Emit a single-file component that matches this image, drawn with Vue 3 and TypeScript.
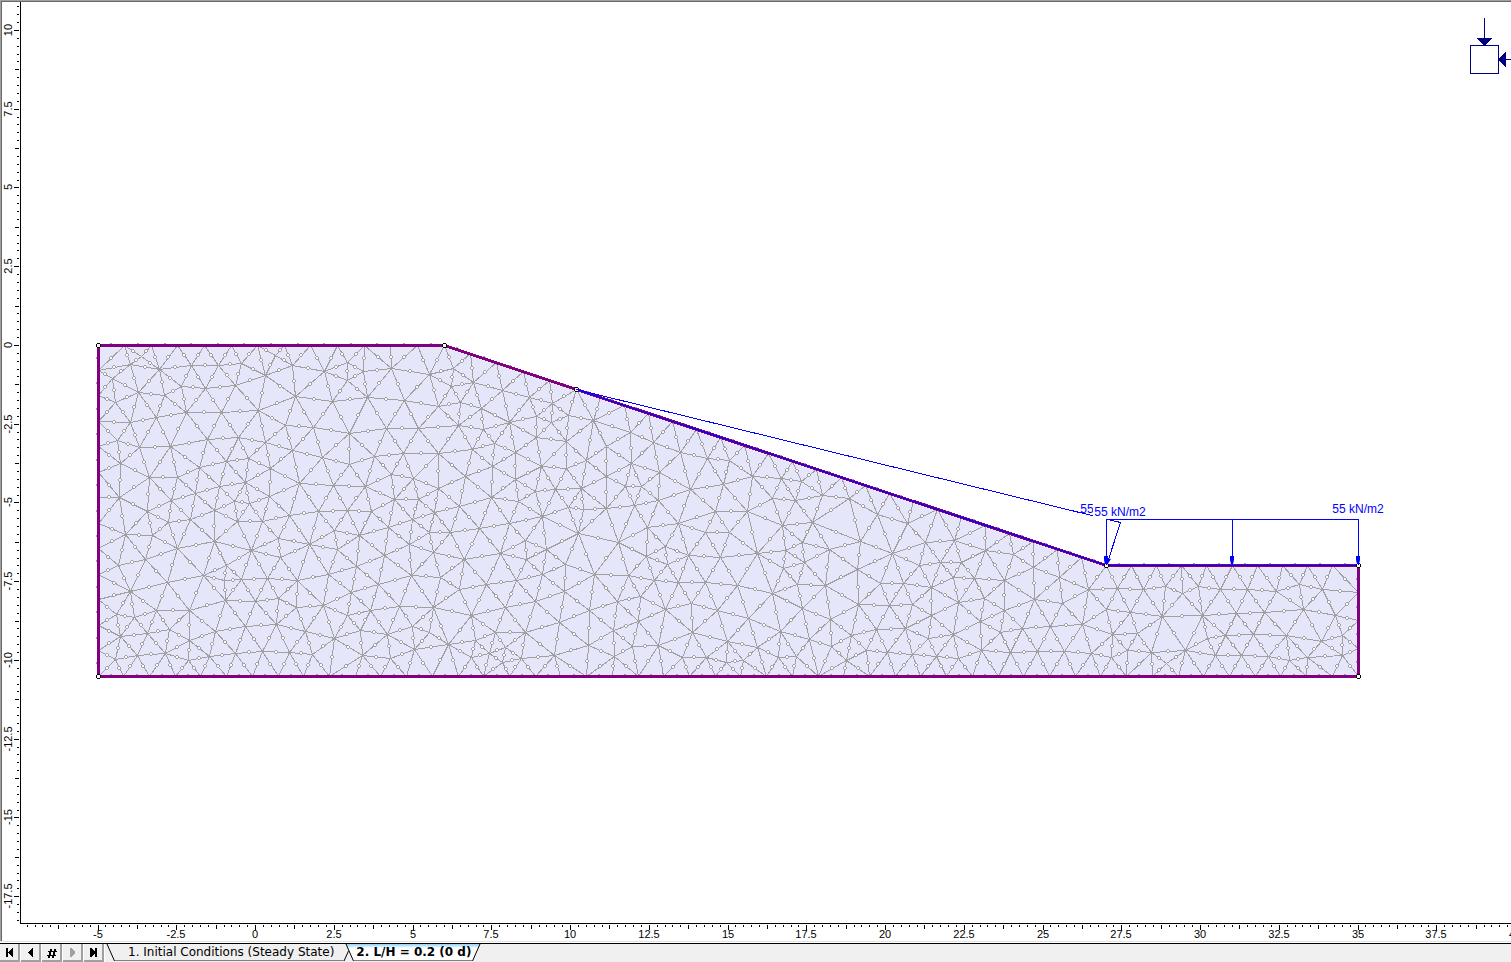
<script setup lang="ts">
import { computed, onBeforeUnmount, onMounted, ref } from 'vue'

type Point = [number, number]

interface Patch {
  x: number
  y: number
  nodes: string
}

interface Tick {
  at: number
  size: number
  label: string
}

/* World scale: pixels per metre and the position of the world origin. */
const SCALE = 31.5
const ORIGIN_X = 255.5
const ORIGIN_Y = 345.4

const width = ref(window.innerWidth)
const height = ref(window.innerHeight)

function measure() {
  width.value = window.innerWidth
  height.value = window.innerHeight
}

onMounted(() => window.addEventListener('resize', measure))
onBeforeUnmount(() => window.removeEventListener('resize', measure))

function makeTicks(from: number, to: number, toPixel: (v: number) => number): Tick[] {
  const ticks: Tick[] = []
  for (let q = from; q <= to; q++) {
    const value = q / 4
    const major = q % 10 === 0
    const size = major ? 5 : q % 5 === 0 ? 4 : 2
    ticks.push({ at: Math.floor(toPixel(value)), size, label: major ? String(value) : '' })
  }
  return ticks
}

const xTicks = computed(() =>
  makeTicks(-29, Math.ceil(((width.value - ORIGIN_X) / SCALE) * 4) + 1, (v) => ORIGIN_X + v * SCALE),
)
const yTicks = computed(() =>
  makeTicks(-Math.floor(((height.value - 41 - ORIGIN_Y) / SCALE) * 4), 43, (v) => ORIGIN_Y - v * SCALE),
)
const xLabels = computed(() => xTicks.value.filter((t) => t.label))
const yLabels = computed(() => yTicks.value.filter((t) => t.label))

/* Interior mesh nodes, in thirds of a pixel from each patch's corner. */
const patches: Patch[] = [
  {
    x: 80,
    y: 330,
    nodes: `185,80 587,76 151,102 97,146 239,118 334,107 416,105 485,99 636,105 556,136 802,98 732,124 802,151 851,124 933,115 1047,133
176,187 107,216 254,195 304,168 377,175 466,166 647,199 757,214 862,202 973,212 1075,229
152,276 229,262 320,246 425,247 535,241 615,287 701,292 808,310 920,296 1016,296
112,331 179,352 272,349 382,327 474,323 556,338 638,361 728,382 808,403 884,379 970,371 1076,370
122,399 208,442 293,443 359,412 439,394 505,385 571,415 659,460 761,466 857,469 934,433 1000,444 1076,474
119,502 203,544 274,511 347,490 417,468 496,458 463,514 509,521 568,499 404,540 331,569 264,577 473,574 548,574 628,556 716,543 802,542 874,544 943,507 1015,507 1064,546
137,612 218,615 292,655 403,633 514,662 595,626 602,683 687,643 764,602 773,657 837,616 926,592 998,568 1047,607 1110,607
116,705 196,687 263,757 371,736 440,707 434,750 484,748 562,745 652,751 745,732 830,708 913,677 989,642 1061,668 994,737
151,785 229,841 328,842 437,811 526,814 596,806 649,832 730,826 814,787 896,763 1082,742
110,854 164,862 122,919 203,910 268,898 328,931 407,904 496,889 589,882 677,903 763,925 802,856 872,841 842,901 958,829 1061,833 922,912 998,889
107,988 173,975 256,969 326,990 389,978 467,970 548,963 629,968 698,973 848,975 932,984 1004,958 1047,907 1104,943`,
  },
  {
    x: 440,
    y: 330,
    nodes: `40,115 34,170 99,157 188,182 268,202 337,219 62,216 124,235 55,286 131,299 209,277 289,260 335,278 386,256 460,271 571,307 500,348 640,338 722,368 803,386 869,392
98,357 163,340 226,368 290,321 380,333 439,390 574,399 304,408 379,416 157,408 76,439
659,428 751,478 850,462 938,439 1023,444 1085,454 996,505 1066,511
226,447 286,483 347,478 423,475 500,438 556,470 605,468 500,535 583,526 655,511 385,531 430,538 154,501 235,514 58,528 308,558 209,580 118,595
415,611 536,636 622,593 715,580 826,544 922,544 1026,586 1116,576 797,606 868,608 677,648 746,676 841,682 952,669 1037,662 1088,636 1093,698 1031,715 1072,762
620,678 683,702 257,632 258,687 319,657 182,669 73,688 376,703 308,733 464,733 566,737 644,750 716,757 796,758 893,767 998,791 140,763 230,751 59,778
374,784 286,814 197,832 94,857 449,840 532,814 602,800 676,838 754,820 833,841 926,865 1022,905 1088,836 596,875 520,901 358,877 257,907 165,908 106,932
446,946 577,949 655,947 758,908 863,935 952,951 1108,928 523,979 343,976 245,985 188,997 197,952 148,970 93,981 728,982 799,982 860,997 911,991 1016,982 1069,979`,
  },
  {
    x: 800,
    y: 440,
    nodes: `67,165 148,176 231,222 323,250 88,327 180,303 276,339 172,388 376,307 463,301 357,376 421,367 483,367 555,332 641,343 394,442 460,412 522,415 613,422 700,381 778,412 865,448
76,436 241,431 311,430 176,494 269,496 338,493 475,487 553,476 614,511 703,479 787,490 919,508 91,538 394,527 541,544 230,567 315,565 384,595 460,584 601,577 667,566 751,558 847,553 938,583
154,586 94,619 200,631 263,636 337,643 139,661 410,650 474,655 545,632 631,636 711,634 794,634 874,640 935,653`,
  },
  {
    x: 1060,
    y: 490,
    nodes: `172,296 250,299 317,290 368,311 415,288 480,297 562,297 649,303 717,284 787,298 210,368 307,379 428,376 528,371 612,367 730,359 825,376
231,431 495,436 580,432 680,437 784,455 848,437 203,481 274,488 377,480 443,446 466,495 545,495 625,499 688,511 743,502 848,495 320,520`,
  },
]

/* Outline corners with the number of element edges along the side that follows. */
const outline: { at: Point; edges: number }[] = [
  { at: [98, 345], edges: 13 },
  { at: [444, 345], edges: 5 },
  { at: [576, 389], edges: 22 },
  { at: [1106, 565], edges: 10 },
  { at: [1358, 565], edges: 4 },
  { at: [1358, 676], edges: 49 },
  { at: [98, 676], edges: 13 },
]

const corners = outline.map((c) => c.at)
const outlinePoints = corners.map(([x, y]) => `${x + 0.5},${y + 0.5}`).join(' ')

function collectNodes(): Point[] {
  const nodes: Point[] = []
  outline.forEach(({ at, edges }, i) => {
    const next = corners[(i + 1) % corners.length]
    for (let k = 0; k < edges; k++) {
      nodes.push([at[0] + ((next[0] - at[0]) * k) / edges, at[1] + ((next[1] - at[1]) * k) / edges])
    }
  })
  for (const patch of patches) {
    for (const pair of patch.nodes.split(/\s+/)) {
      const [u, v] = pair.split(',').map(Number)
      const p: Point = [patch.x + Math.floor(u / 3), patch.y + Math.floor(v / 3)]
      if (!nodes.some((n) => Math.hypot(n[0] - p[0], n[1] - p[1]) < 4)) nodes.push(p)
    }
  }
  return nodes
}

function inside([x, y]: Point): boolean {
  let hit = false
  for (let i = 0, j = corners.length - 1; i < corners.length; j = i++) {
    const [xi, yi] = corners[i]
    const [xj, yj] = corners[j]
    if (yi > y !== yj > y && x < ((xj - xi) * (y - yi)) / (yj - yi) + xi) hit = !hit
  }
  return hit
}

interface Triangle {
  v: [number, number, number]
  cx: number
  cy: number
  r2: number
}

/* Delaunay triangulation by incremental insertion; returns unique edges. */
function triangulate(nodes: Point[]): [number, number][] {
  const pts: Point[] = [...nodes, [-90000, -70000], [90000, -71000], [700, 120000]]
  const n = nodes.length
  const build = (a: number, b: number, c: number): Triangle | null => {
    const [ax, ay] = pts[a]
    const bx = pts[b][0] - ax
    const by = pts[b][1] - ay
    const cx = pts[c][0] - ax
    const cy = pts[c][1] - ay
    const d = 2 * (bx * cy - by * cx)
    if (Math.abs(d) < 1e-7) return null
    const ux = (cy * (bx * bx + by * by) - by * (cx * cx + cy * cy)) / d
    const uy = (bx * (cx * cx + cy * cy) - cx * (bx * bx + by * by)) / d
    return { v: [a, b, c], cx: ax + ux, cy: ay + uy, r2: ux * ux + uy * uy }
  }
  let tris: Triangle[] = [build(n, n + 1, n + 2)!]
  for (let i = 0; i < n; i++) {
    const [x, y] = pts[i]
    const rim = new Map<string, [number, number]>()
    const keep: Triangle[] = []
    for (const t of tris) {
      if ((x - t.cx) ** 2 + (y - t.cy) ** 2 < t.r2) {
        for (let k = 0; k < 3; k++) {
          const a = t.v[k]
          const b = t.v[(k + 1) % 3]
          const key = a < b ? `${a}-${b}` : `${b}-${a}`
          if (rim.has(key)) rim.delete(key)
          else rim.set(key, [a, b])
        }
      } else keep.push(t)
    }
    for (const [a, b] of rim.values()) {
      const t = build(a, b, i)
      if (t) keep.push(t)
    }
    tris = keep
  }
  const edges = new Map<string, [number, number]>()
  for (const { v } of tris) {
    if (v.some((k) => k >= n)) continue
    const [p, q, r] = v.map((k) => pts[k])
    const area = Math.abs((q[0] - p[0]) * (r[1] - p[1]) - (q[1] - p[1]) * (r[0] - p[0]))
    if (area < 4 || !inside([(p[0] + q[0] + r[0]) / 3, (p[1] + q[1] + r[1]) / 3])) continue
    for (let k = 0; k < 3; k++) {
      const a = Math.min(v[k], v[(k + 1) % 3])
      const b = Math.max(v[k], v[(k + 1) % 3])
      edges.set(`${a}-${b}`, [a, b])
    }
  }
  return [...edges.values()]
}

const nodes = collectNodes()
const edges = triangulate(nodes)

const meshPath = edges
  .map(([a, b]) => {
    const [p, q] = [nodes[a], nodes[b]]
    return `M${Math.floor(p[0]) + 0.5} ${Math.floor(p[1]) + 0.5}L${Math.floor(q[0]) + 0.5} ${Math.floor(q[1]) + 0.5}`
  })
  .join('')

const midpoints: Point[] = edges.map(([a, b]) => [
  Math.round((nodes[a][0] + nodes[b][0]) / 2),
  Math.round((nodes[a][1] + nodes[b][1]) / 2),
])
const ringPath = midpoints.map(([x, y]) => `M${x - 1} ${y - 2}h2v1h1v2h-1v1h-2v-1h-1v-2h1z`).join('')
const ringCore = midpoints.map(([x, y]) => `M${x - 1} ${y - 1}h2v2h-2z`).join('')

const loadColumns = [1106, 1232, 1358]

const stages = ['1. Initial Conditions (Steady State)', '2. L/H = 0.2 (0 d)']
const active = ref(1)
const atLast = computed(() => active.value === stages.length - 1)

function step(delta: number) {
  active.value = Math.min(stages.length - 1, Math.max(0, active.value + delta))
}
</script>

<template>
  <main class="window">
    <section class="workspace">
      <svg class="ruler-y" aria-hidden="true">
        <g transform="translate(-2 -2)">
          <rect v-for="t in yTicks" :key="t.at" :x="19 - t.size" :y="t.at" :width="t.size" height="1" />
          <text v-for="t in yLabels" :key="t.label" :transform="`translate(12 ${t.at}) rotate(-90)`">{{ t.label }}</text>
        </g>
      </svg>

      <svg class="plot" role="img" aria-label="Slope finite element mesh">
        <g transform="translate(-21 -2)">
          <polygon class="soil" :points="outlinePoints" />
          <path class="mesh" :d="meshPath" />
          <path class="ring" :d="ringPath" />
          <path class="core" :d="ringCore" />
          <polygon class="boundary" :points="outlinePoints" />
          <polyline class="load" points="576.5,389.5 1106.5,565.5 1358.5,565.5" />

          <g v-for="[x, y] in corners" :key="`${x}-${y}`" :transform="`translate(${x} ${y})`">
            <path class="marker" d="M-1-2h3v1h1v3h-1v1h-3v-1h-1v-3h1z" />
            <path class="core" d="M-1-1h3v3h-3z" />
          </g>

          <text class="load-label" x="1106" y="513">55 kN/m2</text>
          <path class="load" d="M576.5 389.5L1120.5 522.5L1106.5 565.5" />
          <rect class="label-back" x="1093" y="504" width="56" height="15" />
          <rect class="head" x="1106" y="519" width="253" height="1" />
          <g v-for="x in loadColumns" :key="x">
            <rect class="head" :x="x" y="519" width="1" height="46" />
            <path class="head" :d="`M${x - 2} 556h4v4l-1 4h-2l-1-4z`" />
          </g>
          <path class="head" d="M1107 558l4 1l-4 6z" />
          <text class="load-label" x="1120" y="516">55 kN/m2</text>
          <text class="load-label" x="1358" y="513">55 kN/m2</text>
        </g>
        <svg x="100%" overflow="visible">
          <g class="stress" transform="translate(-1511 -2)">
            <path class="stress-line" d="M1484.5 18V40M1505 59.5H1511M1470.5 45.5h28v28h-28z" />
            <path d="M1477 38h15l-7 8h-1z" />
            <path d="M1506 52v15l-8-7v-1z" />
          </g>
        </svg>
      </svg>

      <svg class="ruler-x" aria-hidden="true">
        <g transform="translate(-20 -923)">
          <rect x="20" y="923" width="100%" height="1" />
          <rect v-for="t in xTicks" :key="t.at" :x="t.at" y="925" width="1" :height="t.size" />
          <text v-for="t in xLabels" :key="t.label" :x="t.at" y="938">{{ t.label }}</text>
        </g>
      </svg>
    </section>

    <nav class="tabbar">
      <button class="step" type="button" aria-label="First stage" @click="active = 0">
        <svg width="18" height="16"><path d="M6 4h2v9h-2zM8 8L12 4h1v9h-1L8 9z" /></svg>
      </button>
      <button class="step" type="button" aria-label="Previous stage" @click="step(-1)">
        <svg width="18" height="16"><path d="M7 8L11 4h1v9h-1L7 9z" /></svg>
      </button>
      <button class="step" type="button" aria-label="Go to stage">
        <svg width="18" height="16"><path d="M8 5h2l-2 9h-2zM12 5h2l-2 9h-2zM6 7h9v1h-9zM5 11h9v1h-9z" /></svg>
      </button>
      <button class="step" type="button" aria-label="Next stage" :disabled="atLast" @click="step(1)">
        <svg width="18" height="16"><path d="M12 8L8 4h-1v9h1L12 9z" /></svg>
      </button>
      <button class="step" type="button" aria-label="Last stage" @click="active = stages.length - 1">
        <svg width="18" height="16"><path d="M11 4h2v9h-2zM11 8L7 4h-1v9h1L11 9z" /></svg>
      </button>

      <button
        v-for="(stage, i) in stages"
        :key="stage"
        class="tab"
        :class="{ active: i === active }"
        type="button"
        @click="active = i"
      >
        <svg class="slant" width="10" height="18">
          <defs>
            <linearGradient :id="`glow-${i}`" x1="0" y1="0" x2="0" y2="1">
              <stop offset="0" stop-color="#8fd0f5" />
              <stop offset="0.25" stop-color="#fff" />
            </linearGradient>
          </defs>
          <path v-if="i === active" :fill="`url(#glow-${i})`" d="M2 0H10V17H9z" />
          <path class="slant-line" d="M2 0L9.500 17" />
          <path v-if="i > 0" class="slant-line" d="M0 17L4.500 7" />
        </svg>
        <span class="tab-label">{{ stage }}</span>
        <svg v-if="i === stages.length - 1" class="slant" width="9" height="18">
          <path v-if="i === active" :fill="`url(#glow-${i})`" d="M0 0H8L1 17H0z" />
          <path class="slant-line" d="M8 0L0.500 17" />
        </svg>
      </button>
    </nav>
  </main>
</template>

<style>
body {
  margin: 0;
}
</style>

<style scoped>
.window {
  display: grid;
  grid-template-rows: 1fr auto;
  height: 100vh;
  overflow: hidden;
  background: #fff;
  font-family: "Liberation Sans", Arial, sans-serif;
}

.workspace {
  display: grid;
  grid-template-columns: 18px 1px minmax(0, 1fr);
  grid-template-rows: minmax(0, 1fr) 18px;
  min-height: 0;
  margin-bottom: 1px;
  border-bottom: 1px solid #e3e3e3;
  box-shadow: inset 1px 1px #a0a0a0, inset 2px 2px #696969;
  padding: 2px 0 0 2px;
}

.ruler-y {
  grid-column: 1 / 3;
  box-sizing: border-box;
  width: 19px;
  height: 100%;
  border-right: 1px solid #000;
}

.plot {
  grid-column: 3;
  width: 100%;
  height: 100%;
}

.ruler-x {
  grid-column: 2 / 4;
  width: 100%;
  height: 18px;
}

.ruler-x,
.ruler-y {
  font-size: 11px;
  text-anchor: middle;
  shape-rendering: crispEdges;
}

.soil {
  fill: #e6e6fa;
}

.mesh,
.boundary,
.load {
  fill: none;
  shape-rendering: crispEdges;
}

.mesh {
  stroke: #a0a0a0;
}

.ring {
  fill: #a0a0a0;
  shape-rendering: crispEdges;
}

.core,
.label-back {
  fill: #fff;
  shape-rendering: crispEdges;
}

.boundary {
  stroke: #800080;
  stroke-width: 3px;
}

.marker {
  fill: #000;
  shape-rendering: crispEdges;
}

.load {
  stroke: #00f;
}

.head,
.load-label {
  fill: #00f;
}

.load-label {
  font-size: 12px;
  text-anchor: middle;
}

.stress {
  fill: #000080;
  shape-rendering: crispEdges;
}

.stress-line {
  fill: none;
  stroke: #000080;
}

.tabbar {
  display: flex;
  height: 18px;
  border-top: 1px solid #000;
  background: #f0f0f0;
  overflow: hidden;
}

.step {
  flex: none;
  box-sizing: border-box;
  width: 20px;
  height: 18px;
  margin-right: 1px;
  padding: 0;
  border: solid #a0a0a0;
  border-width: 0 2px 2px 0;
  background: #f0f0f0;
  box-shadow: 1px 0 #fff;
}

.step svg {
  display: block;
  fill: #000;
  shape-rendering: crispEdges;
}

.step:disabled svg {
  fill: #a0a0a0;
}

.tab {
  display: flex;
  flex: none;
  height: 18px;
  padding: 0;
  border: 0;
  background: none;
  color: #000;
  font: 12px/16px "DejaVu Sans", Verdana, sans-serif;
}

.slant {
  flex: none;
}

.slant-line {
  fill: none;
  stroke: #000;
}

.tab-label {
  box-sizing: border-box;
  height: 17px;
  padding: 0 10px 0 13px;
  border-bottom: 1px solid #808080;
}

.tab.active {
  font-weight: bold;
}

.tab.active .tab-label {
  padding: 0 1px 0 2px;
  background: linear-gradient(#8fd0f5, #fff 25%);
}
</style>
